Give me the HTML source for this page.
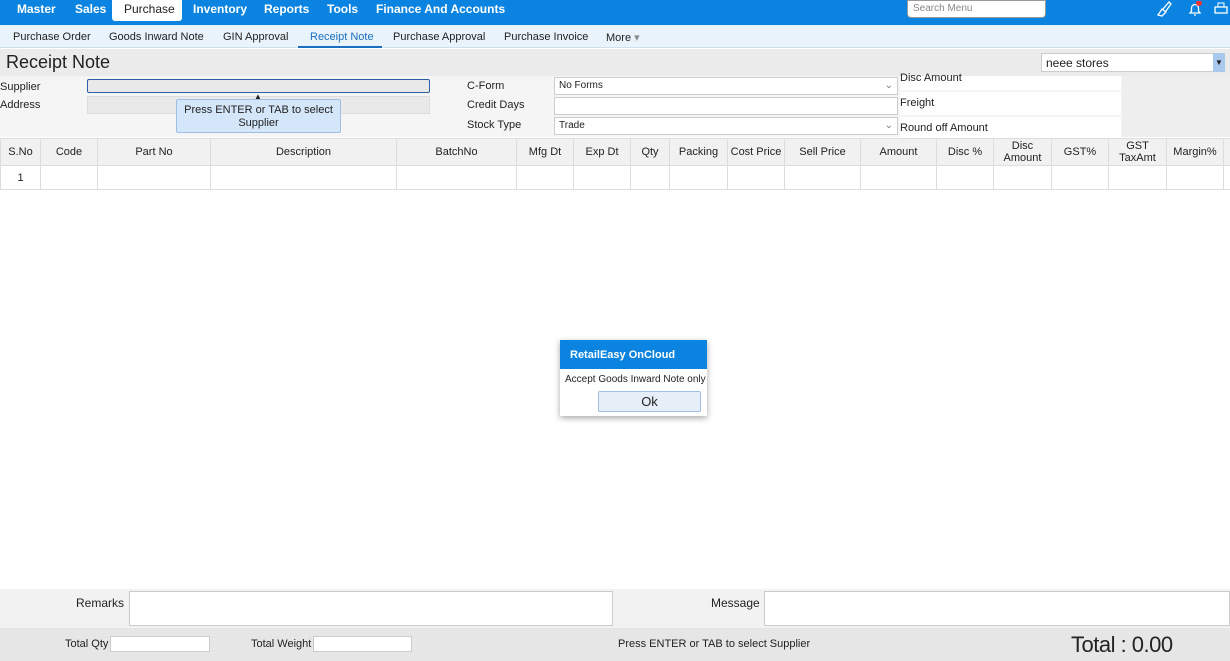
<!DOCTYPE html>
<html><head><meta charset="utf-8"><style>
*{box-sizing:border-box;margin:0;padding:0}
body{width:1230px;height:661px;position:relative;overflow:hidden;background:#fff;font-family:"Liberation Sans",sans-serif;font-size:11px;color:#222}
.a{position:absolute}
.top{left:0;top:0;width:1230px;height:25px;background:#0a84e0}
.top span{position:absolute;top:2px;color:#fff;font-size:12px;font-weight:bold}
.sub{left:0;top:25px;width:1230px;height:23px;background:#e8f3fb;border-bottom:1px solid #cfe0ee}
.sub span{position:absolute;top:6px;font-size:11px;color:#222}
.inp{background:#fff;border:1px solid #ccc}
table{border-collapse:collapse;position:absolute;left:0;top:138px;table-layout:fixed;width:1233px}
td{border:1px solid #ddd;text-align:center;font-size:11px;padding:0;overflow:hidden;white-space:nowrap}
tr.h td{background:#f1f1f1;height:27px;line-height:12px}
tr.r td{height:24px;background:#fff}
</style></head><body>
<div class="a top">
<span style="left:17px">Master</span><span style="left:75px">Sales</span>
<div class="a" style="left:112px;top:0;width:70px;height:21px;background:#fff;border-radius:0 0 3px 3px"></div>
<span style="left:124px;color:#222;font-weight:normal">Purchase</span>
<span style="left:193px">Inventory</span><span style="left:264px">Reports</span><span style="left:327px">Tools</span><span style="left:376px">Finance And Accounts</span>
<div class="a" style="left:907px;top:0;width:139px;height:18px;background:#fff;border-radius:0 0 4px 4px;border:1px solid #999;color:#888;font-size:10px;font-weight:normal;padding:2px 5px">Search Menu</div>
<svg class="a" style="left:1155px;top:1px" width="18" height="16" viewBox="0 0 18 16"><path d="M3 14l4-6 4 3-4 4zM8 8l6-7 2 2-5 7" fill="none" stroke="#fff" stroke-width="1.3"/></svg>
<svg class="a" style="left:1187px;top:1px" width="16" height="16" viewBox="0 0 16 16"><path d="M3 12h10l-1.5-2V7a3.5 3.5 0 0 0-7 0v3zM7 14h2" fill="none" stroke="#fff" stroke-width="1.3"/><circle cx="12" cy="2" r="3" fill="#e33"/></svg>
<svg class="a" style="left:1214px;top:2px" width="14" height="14" viewBox="0 0 14 14"><rect x="1" y="5" width="12" height="6" fill="none" stroke="#fff" stroke-width="1.3"/><rect x="4" y="1" width="6" height="4" fill="none" stroke="#fff"/></svg>
</div>
<div class="a sub">
<span style="left:13px">Purchase Order</span><span style="left:109px">Goods Inward Note</span><span style="left:223px">GIN Approval</span><span style="left:310px;color:#1a6fc0">Receipt Note</span><span style="left:393px">Purchase Approval</span><span style="left:504px">Purchase Invoice</span><span style="left:606px">More <span style="position:static;color:#888">▾</span></span>
<div class="a" style="left:298px;top:21px;width:84px;height:2px;background:#1a6fc0"></div>
</div>
<div class="a" style="left:0;top:49px;width:1230px;height:27px;background:#ebebeb"></div>
<div class="a" style="left:6px;top:52px;font-size:18px">Receipt Note</div>
<div class="a inp" style="left:1041px;top:53px;width:184px;height:19px;font-size:12px;padding:2px 4px">neee stores</div>
<div class="a" style="left:1213px;top:53px;width:12px;height:19px;background:#a8c8ec;font-size:8px;text-align:center;line-height:19px">▼</div>
<div class="a" style="left:0;top:76px;width:1230px;height:61px;background:#f5f5f5"></div>
<div class="a" style="left:0;top:81px">Supplier</div>
<div class="a" style="left:0;top:99px">Address</div>
<div class="a" style="left:87px;top:79px;width:343px;height:14px;background:#e9e9e9;border:1px solid #2a5fa8;border-radius:2px"></div>
<div class="a" style="left:87px;top:96px;width:343px;height:18px;background:#e9e9e9;border:1px solid #ddd"></div>
<div class="a" style="left:176px;top:99px;width:165px;height:34px;background:#d4e6f9;border:1px solid #9fc0e4;border-radius:2px;text-align:center;line-height:13px;padding-top:4px">Press ENTER or TAB to select Supplier</div>
<div class="a" style="left:254px;top:92px;font-size:8px">▲</div>
<div class="a" style="left:467px;top:80px">C-Form</div>
<div class="a" style="left:467px;top:99px">Credit Days</div>
<div class="a" style="left:467px;top:119px">Stock Type</div>
<div class="a inp" style="left:554px;top:77px;width:344px;height:18px;font-size:10px;padding:2px 4px">No Forms<span style="float:right;color:#777">⌄</span></div>
<div class="a inp" style="left:554px;top:97px;width:344px;height:18px"></div>
<div class="a inp" style="left:554px;top:117px;width:344px;height:18px;font-size:10px;padding:2px 4px">Trade<span style="float:right;color:#777">⌄</span></div>
<div class="a" style="left:900px;top:76px;width:221px;height:14px;background:#fff;line-height:4px">Disc Amount</div>
<div class="a" style="left:900px;top:92px;width:221px;height:23px;background:#fff;padding-top:5px">Freight</div>
<div class="a" style="left:900px;top:117px;width:221px;height:20px;background:#fff;padding-top:5px">Round off Amount</div>
<div class="a" style="left:1122px;top:76px;width:108px;height:61px;background:#eee"></div>
<table>
<colgroup><col style="width:40px"><col style="width:57px"><col style="width:113px"><col style="width:186px"><col style="width:120px"><col style="width:57px"><col style="width:57px"><col style="width:39px"><col style="width:58px"><col style="width:57px"><col style="width:76px"><col style="width:76px"><col style="width:57px"><col style="width:58px"><col style="width:57px"><col style="width:58px"><col style="width:57px"><col style="width:10px"></colgroup>
<tr class="h"><td>S.No</td><td>Code</td><td>Part No</td><td>Description</td><td>BatchNo</td><td>Mfg Dt</td><td>Exp Dt</td><td>Qty</td><td>Packing</td><td>Cost Price</td><td>Sell Price</td><td>Amount</td><td>Disc %</td><td>Disc<br>Amount</td><td>GST%</td><td>GST<br>TaxAmt</td><td>Margin%</td><td></td></tr>
<tr class="r"><td>1</td><td></td><td></td><td></td><td></td><td></td><td></td><td></td><td></td><td></td><td></td><td></td><td></td><td></td><td></td><td></td><td></td><td></td></tr>
</table>
<div class="a" style="left:560px;top:340px;width:147px;height:76px;background:#fff;box-shadow:0 2px 6px rgba(0,0,0,.35)">
<div style="height:29px;background:#0a84e0;color:#fff;font-weight:bold;font-size:11px;padding:9px 0 0 10px">RetailEasy OnCloud</div>
<div style="font-size:10px;padding:5px 0 0 5px">Accept Goods Inward Note only</div>
<div class="a" style="left:38px;top:51px;width:103px;height:21px;background:#e6eef8;border:1px solid #9fc0e4;border-radius:2px;text-align:center;font-size:13px;line-height:19px">Ok</div>
</div>
<div class="a" style="left:0;top:589px;width:1230px;height:39px;background:#f2f2f2"></div>
<div class="a" style="left:76px;top:596px;font-size:12px">Remarks</div>
<div class="a inp" style="left:129px;top:591px;width:484px;height:35px"></div>
<div class="a" style="left:711px;top:596px;font-size:12px">Message</div>
<div class="a inp" style="left:764px;top:591px;width:466px;height:35px"></div>
<div class="a" style="left:0;top:628px;width:1230px;height:33px;background:#e6e6e6"></div>
<div class="a" style="left:65px;top:638px">Total Qty</div>
<div class="a inp" style="left:110px;top:636px;width:100px;height:16px"></div>
<div class="a" style="left:251px;top:638px">Total Weight</div>
<div class="a inp" style="left:313px;top:636px;width:99px;height:16px"></div>
<div class="a" style="left:618px;top:638px">Press ENTER or TAB to select Supplier</div>
<div class="a" style="left:1071px;top:632px;font-size:22px;letter-spacing:-0.5px">Total : 0.00</div>
</body></html>
